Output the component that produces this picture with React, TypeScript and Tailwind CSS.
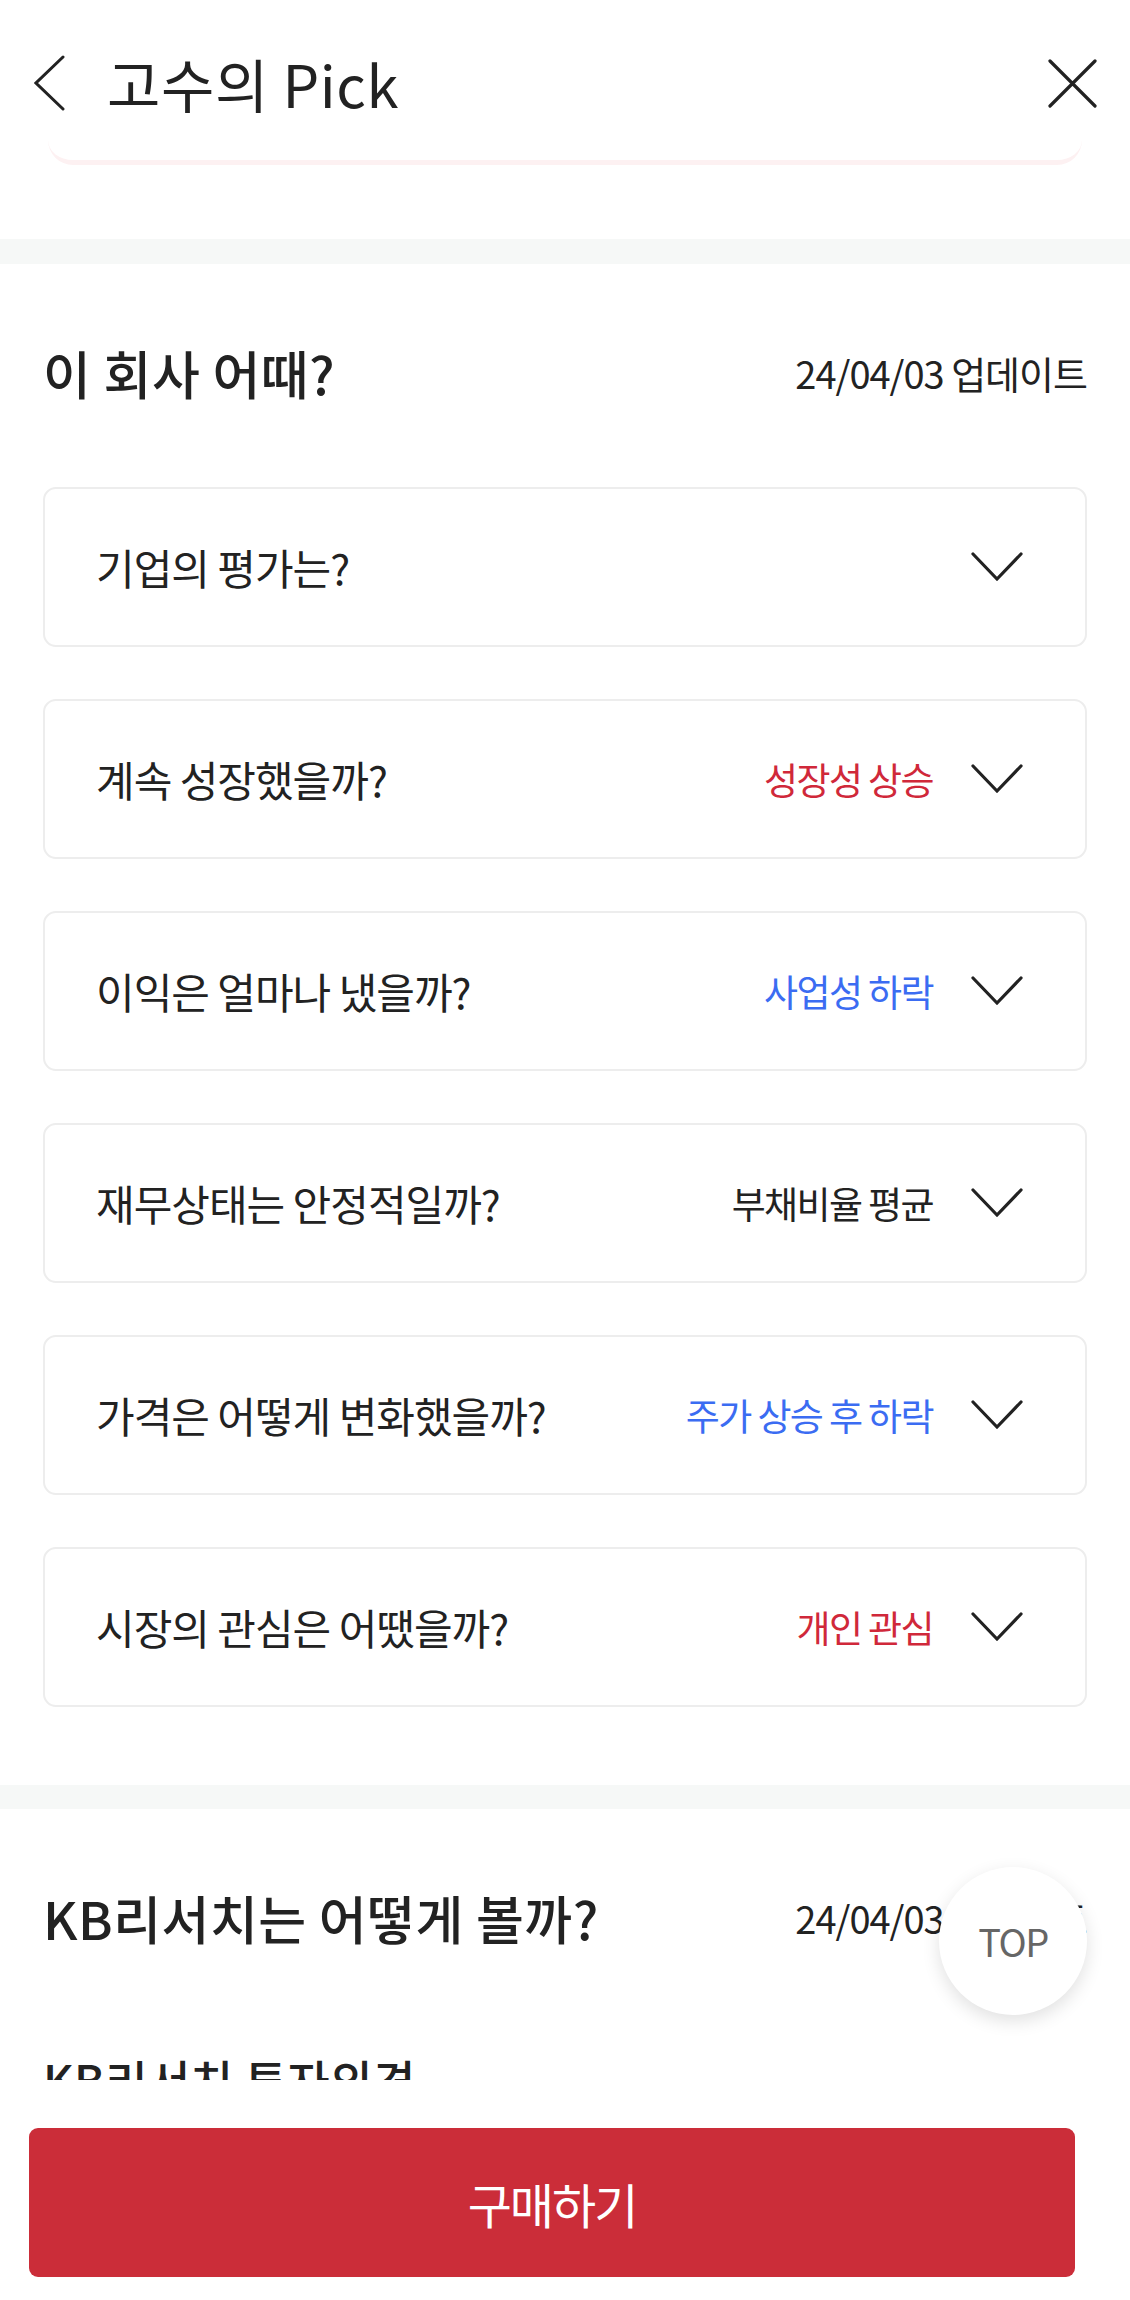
import React from "react";

type Item = { q: string; label?: string; tone?: "red" | "blue" | "dark" };

const items: Item[] = [
  { q: "기업의 평가는?" },
  { q: "계속 성장했을까?", label: "성장성 상승", tone: "red" },
  { q: "이익은 얼마나 냈을까?", label: "사업성 하락", tone: "blue" },
  { q: "재무상태는 안정적일까?", label: "부채비율 평균", tone: "dark" },
  { q: "가격은 어떻게 변화했을까?", label: "주가 상승 후 하락", tone: "blue" },
  { q: "시장의 관심은 어땠을까?", label: "개인 관심", tone: "red" },
];

const toneClass = {
  red: "text-[#d0283a]",
  blue: "text-[#3b6cf2]",
  dark: "text-[#222222]",
};

function ChevronDown() {
  return (
    <svg width="52" height="30" viewBox="0 0 52 30" fill="none">
      <polyline
        points="2,2 26,27 50,2"
        stroke="#222222"
        strokeWidth="3.2"
        strokeLinecap="round"
        strokeLinejoin="miter"
      />
    </svg>
  );
}

function Header() {
  return (
    <div className="flex h-[140px] items-center pt-[26px] pr-[33px] pl-[34px]">
      <svg width="31" height="56" viewBox="0 0 31 56" fill="none">
        <polyline
          points="29,2 2,28 29,54"
          stroke="#222222"
          strokeWidth="3"
          strokeLinecap="round"
        />
      </svg>
      <h1 className="ml-[42px] text-[58px] leading-none font-normal tracking-[0.6px] text-[#222222]">
        고수의 Pick
      </h1>
      <svg className="ml-auto" width="49" height="49" viewBox="0 0 49 49" fill="none">
        <path
          d="M2 2 L47 47 M47 2 L2 47"
          stroke="#222222"
          strokeWidth="3.2"
          strokeLinecap="round"
        />
      </svg>
    </div>
  );
}

function SectionHead(props: { title: string; date: string }) {
  return (
    <div className="flex h-[60px] items-center justify-between">
      <h2 className="text-[52px] leading-none font-medium tracking-[0.5px] text-[#222222]">
        {props.title}
      </h2>
      <span className="text-[38px] leading-none tracking-[-1px] text-[#222222]">
        {props.date}
      </span>
    </div>
  );
}

function QuestionCard(props: { item: Item }) {
  const { item } = props;
  return (
    <div className="flex h-[160px] items-center rounded-[13px] border-2 border-[#ededed] bg-white pr-[62px] pl-[51px]">
      <span className="text-[42px] leading-none tracking-[-1px] text-[#222222]">
        {item.q}
      </span>
      {item.label ? (
        <span
          className={
            "ml-auto text-[37px] leading-none tracking-[-1.6px] " +
            toneClass[item.tone ?? "dark"]
          }
        >
          {item.label}
        </span>
      ) : null}
      <span className={item.label ? "ml-[38px]" : "ml-auto"}>
        <ChevronDown />
      </span>
    </div>
  );
}

export default function App() {
  return (
    <div className="relative h-[2300px] w-[1130px] overflow-hidden bg-white font-['Noto_Sans_CJK_KR','Noto_Sans',sans-serif]">
      <Header />
      <div className="mx-[48px] h-[25px] rounded-b-[26px] border-b-[5px] border-[#fdf1f2]" />
      <div className="h-[74px]" />
      <div className="h-[25px] bg-[#f6f8f7]" />

      <section className="px-[43px] pt-[79px] pb-[78px]">
        <SectionHead title="이 회사 어때?" date="24/04/03 업데이트" />
        <div className="mt-[84px] flex flex-col gap-[52px]">
          {items.map((item) => (
            <QuestionCard key={item.q} item={item} />
          ))}
        </div>
      </section>

      <div className="h-[24px] bg-[#f6f8f7]" />

      <section className="px-[43px] pt-[79px]">
        <SectionHead title="KB리서치는 어떻게 볼까?" date="24/04/03 업데이트" />
        <p className="mt-[108px] text-[46px] leading-none font-medium tracking-[0.5px] text-[#222222]">
          KB리서치 투자의견
        </p>
      </section>

      {/* floating top button */}
      <button className="absolute top-[1867px] left-[939px] flex h-[148px] w-[148px] items-center justify-center rounded-full bg-white shadow-[0_6px_18px_rgba(0,0,0,0.12)]">
        <span className="text-[38px] leading-none tracking-[-1.5px] text-[#666666]">TOP</span>
      </button>

      {/* fixed bottom bar */}
      <div className="absolute inset-x-0 bottom-0 h-[220px] bg-white pt-[48px] pr-[55px] pl-[29px]">
        <button className="flex h-[149px] w-full items-center justify-center rounded-[9px] bg-[#cb2d39]">
          <span className="text-[48px] leading-none tracking-[-2px] text-white">구매하기</span>
        </button>
      </div>
    </div>
  );
}
